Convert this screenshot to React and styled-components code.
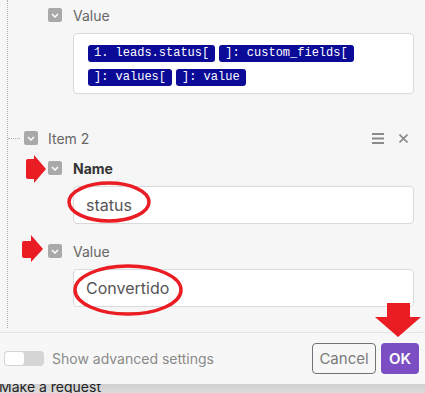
import React from 'react';
import styled, { createGlobalStyle } from 'styled-components';

const GlobalStyle = createGlobalStyle`
  html, body {
    margin: 0;
    padding: 0;
  }
  body {
    font-family: Inter, "Noto Sans", sans-serif;
    background: #f6f6f6;
  }
`

const Screen = styled.div`
  position: relative;
  width: 425px;
  height: 393px;
  display: flex;
  flex-direction: column;
  background: #f6f6f6;
  overflow: hidden;
`
const Body = styled.div`
  flex: 1;
  min-height: 0;
  overflow: hidden;
  padding: 0 11px 4px 7px;
`
const Tree = styled.div`
  height: 100%;
  box-sizing: border-box;
  border-left: 1px dotted #b3b3b3;
  padding-top: 5px;
`
const Field = styled.div`
  padding-left: 40px;
  margin-top: ${p => p.$gap || 0}px;
`
const LabelRow = styled.div`
  display: flex;
  align-items: center;
  height: 20px;
`
const Check = styled.span`
  width: 14px;
  height: 14px;
  flex: none;
  border-radius: 2px;
  background: #a9a9a9;
  display: flex;
  align-items: center;
  justify-content: center;
  margin-right: ${p => p.$space || 11}px;
`
const Label = styled.span`
  font-size: 14px;
  color: ${p => p.$strong ? '#333' : '#666'};
  font-weight: ${p => p.$strong ? 700 : 400};
`
const InputBox = styled.div`
  margin: 8px 0 0 25px;
  min-height: 38px;
  box-sizing: border-box;
  background: #fff;
  border: 1px solid #dadada;
  border-radius: 4px;
  padding: 0 12px;
  display: flex;
  align-items: center;
  font-size: 16px;
  color: #555;
`
const PillBox = styled.div`
  margin: 8px 0 0 25px;
  box-sizing: border-box;
  background: #fff;
  border: 1px solid #dadada;
  border-radius: 4px;
  padding: 11px 14px 7px;
  display: flex;
  flex-wrap: wrap;
  gap: 7px 4px;
`
const Pill = styled.span`
  font-family: "Liberation Mono", "Courier New", monospace;
  font-size: 12px;
  line-height: 17px;
  height: 17px;
  padding: 0 6px;
  background: #0b0b98;
  color: #fff;
  border-radius: 3px;
  white-space: pre;
`
const ItemHeader = styled.div`
  display: flex;
  align-items: center;
  height: 20px;
  margin-top: 34px;
  padding-right: 6px;
`
const Connector = styled.span`
  width: 12px;
  border-top: 1px dotted #b3b3b3;
  margin-right: 4px;
`
const Spacer = styled.span`
  flex: 1;
`
const IconBtn = styled.span`
  display: flex;
  margin-left: ${p => p.$gap || 0}px;
`
const Footer = styled.div`
  height: 52px;
  flex: none;
  box-sizing: border-box;
  border-top: 1px solid #e5e5e5;
  background: #f7f7f7;
  display: flex;
  align-items: center;
  padding: 0 6px 0 4px;
`
const Toggle = styled.span`
  width: 40px;
  height: 15px;
  box-sizing: border-box;
  padding: 1px;
  border-radius: 4px;
  background: #d5d5d5;
  display: flex;
  &::before{
    content: '';
    width: 19px;
    height: 13px;
    border-radius: 3px;
    background: #fff;
  }
`
const ToggleText = styled.span`
  margin-left: 8px;
  font-size: 14px;
  color: #8a8a8a;
`
const Button = styled.button`
  height: 31px;
  box-sizing: border-box;
  font-family: Inter, "Noto Sans", sans-serif;
  font-size: 15px;
  border-radius: 4px;
  padding: 0;
  width: ${p => p.$primary ? 38 : 64}px;
  margin-left: ${p => p.$primary ? 5 : 0}px;
  background: ${p => p.$primary ? '#7b4fc3' : 'transparent'};
  color: ${p => p.$primary ? '#fff' : '#7a7a7a'};
  font-weight: ${p => p.$primary ? 600 : 400};
  border: ${p => p.$primary ? 'none' : '1px solid #6f7378'};
`
const Strip = styled.div`
  height: 9px;
  flex: none;
  overflow: hidden;
  background: linear-gradient(#d0d0d0, #dcdcdc);
  span{
    display: block;
    margin: -4px 0 0 -1px;
    font-size: 14px;
    line-height: 14px;
    color: #222;
  }
`
const Marks = styled.svg`
  position: absolute;
  top: 0;
  left: 0;
  pointer-events: none;
`

const Chevron = () => (
  <svg width="8" height="5" viewBox="0 0 8 5">
    <path d="M1 1 L4 4 L7 1" fill="none" stroke="#fff" strokeWidth="1.5" />
  </svg>
)

export default function App(){
  return <Screen>
    <GlobalStyle />
    <Body>
      <Tree>
        <Field>
          <LabelRow><Check><Chevron /></Check><Label>Value</Label></LabelRow>
          <PillBox>
            <Pill>1. leads.status[</Pill>
            <Pill>]: custom_fields[</Pill>
            <Pill>]: values[</Pill>
            <Pill>]: value</Pill>
          </PillBox>
        </Field>
        <ItemHeader>
          <Connector />
          <Check $space={10}><Chevron /></Check>
          <Label>Item 2</Label>
          <Spacer />
          <IconBtn>
            <svg width="12" height="11" viewBox="0 0 12 11">
              <path d="M0 1 H12 M0 5.5 H12 M0 10 H12" stroke="#8a8a8a" strokeWidth="1.8" />
            </svg>
          </IconBtn>
          <IconBtn $gap={15}>
            <svg width="9" height="9" viewBox="0 0 9 9">
              <path d="M0.5 0.5 L8.5 8.5 M8.5 0.5 L0.5 8.5" stroke="#8a8a8a" strokeWidth="1.6" />
            </svg>
          </IconBtn>
        </ItemHeader>
        <Field $gap={10}>
          <LabelRow><Check><Chevron /></Check><Label $strong>Name</Label></LabelRow>
          <InputBox>status</InputBox>
        </Field>
        <Field $gap={17}>
          <LabelRow><Check><Chevron /></Check><Label>Value</Label></LabelRow>
          <InputBox>Convertido</InputBox>
        </Field>
      </Tree>
    </Body>
    <Footer>
      <Toggle />
      <ToggleText>Show advanced settings</ToggleText>
      <Spacer />
      <Button>Cancel</Button>
      <Button $primary>OK</Button>
    </Footer>
    <Strip><span>Make a request</span></Strip>
    <Marks width="425" height="393" viewBox="0 0 425 393">
      <g fill="#ea1c24">
        <path d="M28 159 H34 V155 L46 169 L34 183 V179 H28 Q26 179 26 177 V161 Q26 159 28 159 Z" />
        <path d="M24 241 H31 V235 L43 249 L31 262 V258 H24 Q22 258 22 256 V243 Q22 241 24 241 Z" />
        <path d="M387 303 H410 V317 H421 L398 337 L375 317 H387 Z" />
      </g>
      <g fill="none" stroke="#ea1c24" strokeWidth="3.5">
        <ellipse cx="109" cy="202" rx="40" ry="19" />
        <ellipse cx="128" cy="290" rx="53" ry="24" />
      </g>
    </Marks>
  </Screen>
}
